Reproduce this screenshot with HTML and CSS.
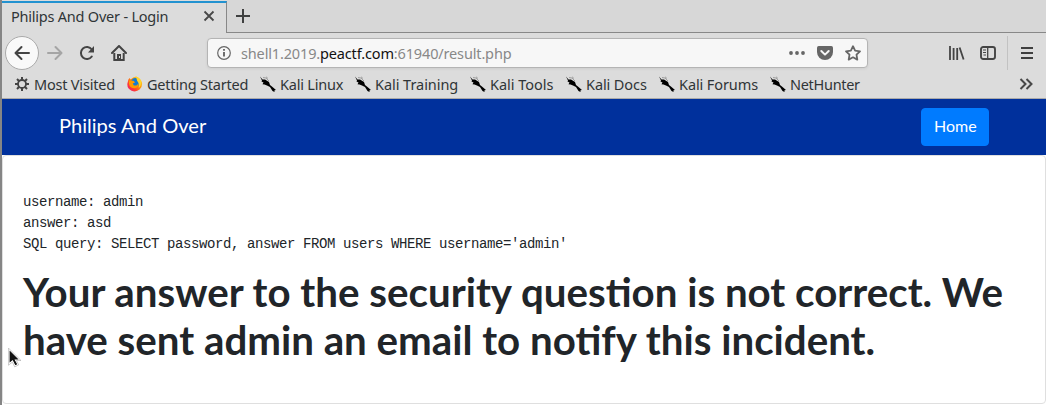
FILE: index.html
```html
<!DOCTYPE html>
<html lang="en">
<head>
<meta charset="utf-8">
<title>Philips And Over - Login</title>
<link rel="stylesheet" href="styles.css">
</head>
<body>
<svg width="0" height="0" class="defs">
  <symbol id="kali" viewBox="0 0 16 16"><path d="M0 .5L2.500 3.500 5 3.500 9 6 10 9 12.500 11 16 14 14.500 14.300 14.500 16 12.500 15 10 11 7 9.500 4.500 8.500 2.500 8.200 3.500 6.500 1.500 5.500 2 4.500z" fill="#000"/><path d="M3 1.500l3 .5 3 3M6 .8l2 1.700" stroke="#777" stroke-width=".6" fill="none"/></symbol>
</svg>
<div class="window">
  <div class="tabs">
    <div class="tab"><span class="tab-title">Philips And Over - Login</span>
      <svg class="close" width="12" height="12" viewBox="0 0 12 12"><path d="M1.5 1.5l9 9M10.5 1.5l-9 9" stroke="#484848" stroke-width="1.8"/></svg>
    </div>
    <div class="tab-rest"><svg width="14" height="14" viewBox="0 0 14 14"><path d="M7 0v14M0 7h14" stroke="#3f4040" stroke-width="2"/></svg></div>
  </div>
  <div class="toolbar">
    <div class="back"><svg width="18" height="16" viewBox="0 0 18 16"><path d="M16 8H3M8.5 2L2.5 8l6 6" fill="none" stroke="#444" stroke-width="2" stroke-linecap="round" stroke-linejoin="round"/></svg></div>
    <svg class="forward" width="18" height="16" viewBox="0 0 18 16"><path d="M2 8h13M9.5 2l6 6-6 6" fill="none" stroke="#a5a5a5" stroke-width="2" stroke-linecap="round" stroke-linejoin="round"/></svg>
    <svg class="reload" width="16" height="16" viewBox="0 0 16 16"><path d="M12.8 4.5A6 6 0 1 0 12.8 11.5" fill="none" stroke="#444" stroke-width="2" stroke-linecap="round"/><path d="M15 1v6.5H9z" fill="#444"/></svg>
    <svg class="home" width="16" height="16" viewBox="0 0 16 16"><path d="M1 8l7-7 7 7" fill="none" stroke="#444" stroke-width="2" stroke-linecap="round" stroke-linejoin="round"/><path d="M3.3 8v7h9.4V8" fill="none" stroke="#444" stroke-width="2"/><path d="M6 9h4v6H6z" fill="#444"/><path d="M8 11h1v2H8z" fill="#ddd"/></svg>
    <div class="urlbar">
      <svg width="14" height="14" viewBox="0 0 14 14"><circle cx="7" cy="7" r="6.3" fill="none" stroke="#666" stroke-width="1.2"/><path d="M7 6v4.5M7 3v1.7" stroke="#555" stroke-width="1.7"/></svg>
      <span class="url">shell1.2019.<b>peactf.com</b>:61940/result.php</span>
      <svg class="dots" width="16" height="4" viewBox="0 0 16 4"><g fill="#666"><circle cx="2" cy="2" r="1.9"/><circle cx="8" cy="2" r="1.9"/><circle cx="14" cy="2" r="1.9"/></g></svg>
      <svg class="pocket" width="16" height="15" viewBox="0 0 16 15"><path d="M1.7 0h12.6A1.7 1.7 0 0 1 16 1.7V6a8 8 0 0 1-16 0V1.7A1.7 1.7 0 0 1 1.7 0z" fill="#666"/><path d="M4.3 5L8 8.6 11.7 5" fill="none" stroke="#f7f7f7" stroke-width="2" stroke-linecap="round" stroke-linejoin="round"/></svg>
      <svg class="star" width="16" height="16" viewBox="0 0 16 16"><path d="M8 1.2l2.1 4.4 4.9.7-3.5 3.4.8 4.9L8 12.3l-4.3 2.3.8-4.9L1 6.3l4.9-.7z" fill="none" stroke="#666" stroke-width="1.8" stroke-linejoin="round"/></svg>
    </div>
    <svg class="library" width="16" height="16" viewBox="0 0 16 16"><path d="M1 1v14M4.6 3v12M8.2 3v12M10.6 2.5l4 12" stroke="#444" stroke-width="1.8"/></svg>
    <svg class="sidebar" width="16" height="14" viewBox="0 0 16 14"><rect x="1" y="1" width="14" height="12" rx="2.2" fill="none" stroke="#444" stroke-width="1.9"/><path d="M7.7 1v12" stroke="#444" stroke-width="1.3"/><path d="M3 4h3M3 6.5h3M3.5 9H6" stroke="#444"/></svg>
    <div class="menu"><svg width="12" height="12" viewBox="0 0 12 12"><path d="M0 1h12M0 6h12M0 11h12" stroke="#3f3f3f" stroke-width="1.9"/></svg></div>
  </div>
  <div class="bookmarks">
    <div class="mark visited"><svg width="14" height="14" viewBox="0 0 14 14"><circle cx="7" cy="7" r="4" fill="none" stroke="#444" stroke-width="1.8"/><path d="M7 0v3M7 11v3M0 7h3M11 7h3M2 2l2.2 2.2M9.8 9.8L12 12M2 12l2.2-2.2M9.8 4.2L12 2" stroke="#444" stroke-width="2"/></svg><span>Most Visited</span></div>
    <div class="mark started"><svg width="16" height="16" viewBox="0 0 16 16"><defs><linearGradient id="fire" x1="1" y1="0" x2="0" y2="1"><stop offset="0" stop-color="#fff44f"/><stop offset=".4" stop-color="#ff9800"/><stop offset=".7" stop-color="#ff3b35"/><stop offset="1" stop-color="#e8157c"/></linearGradient></defs><path d="M1.4 3.5L2.6 2l1 1.4Q6 1 9 .6q4.8 1.6 6 6 .6 4-2.4 7-3.6 2.8-8 1.2Q-.2 12.7.4 7.5z" fill="url(#fire)"/><circle cx="8.3" cy="6.5" r="4.4" fill="#147bd1"/><path d="M2 4.5l4.5.3 1.6 1.6-2.3 1.2 1 2 2.7-.2 2-1.8q0 4-3.7 4.7Q3 12.5 2 8z" fill="#ff9b00"/><path d="M9 .6q4 1.4 5 5 .4 4-2.2 6.5.6-5-1.600-7z" fill="#ffd52d"/></svg><span>Getting Started</span></div>
    <div class="mark linux"><svg width="16" height="16"><use href="#kali"/></svg><span>Kali Linux</span></div>
    <div class="mark training"><svg width="16" height="16"><use href="#kali"/></svg><span>Kali Training</span></div>
    <div class="mark tools"><svg width="16" height="16"><use href="#kali"/></svg><span>Kali Tools</span></div>
    <div class="mark docs"><svg width="16" height="16"><use href="#kali"/></svg><span>Kali Docs</span></div>
    <div class="mark forums"><svg width="16" height="16"><use href="#kali"/></svg><span>Kali Forums</span></div>
    <div class="mark hunter"><svg width="16" height="16"><use href="#kali"/></svg><span>NetHunter</span></div>
    <svg class="more" width="14" height="12" viewBox="0 0 14 12"><path d="M1.5 1l5 5-5 5M7.5 1l5 5-5 5" fill="none" stroke="#484848" stroke-width="2"/></svg>
  </div>
  <nav class="navbar"><span class="brand">Philips And Over</span><a class="btn">Home</a></nav>
  <main class="card">
    <pre class="log">username: admin
answer: asd
SQL query: SELECT password, answer FROM users WHERE username='admin'</pre>
    <h1 class="notice">Your answer to the security question is not correct. We have sent admin an email to notify this incident.</h1>
  </main>
</div>
<svg class="cursor" width="14" height="20" viewBox="0 0 14 20"><path d="M1 1v15l3.5-3 2.5 5 3-1.5L7.5 12H12z" fill="#111" stroke="#fff" stroke-width="1.2"/><path d="M.4 0v17.2l4-3 2.3 4.7 4-2-2.3-4.4H13z" fill="none" stroke="#999" stroke-width=".5"/></svg>
</body>
</html>
```
FILE: styles.css
```css
* { box-sizing: border-box; }
body { margin: 0; width: 1046px; height: 405px; overflow: hidden; background: #fff; font-family: "Noto Sans", sans-serif; }
svg { display: block; flex: none; }
.defs { position: absolute; }
.window { height: 405px; border-left: 2px solid #858585; }
.tabs { display: flex; height: 33px; background: #dcdcdc; }
.tab { display: flex; align-items: center; width: 225px; padding: 0 11px 4px 9px; border-top: 2px solid #2292d0; border-right: 1px solid #888; margin-top: 1px; background: #dcdcdc; }
.tab-title { width: 160px; font-size: 14.5px; letter-spacing: -.22px; color: #303537; white-space: nowrap; }
.close { margin-left: 32px; }
.tab-rest { flex: 1; padding: 9px 0 0 9px; background: #d7d7d7; border-bottom: 1px solid #888; }
.toolbar { display: flex; align-items: center; height: 40px; background: #dcdcdc; }
.back { display: flex; align-items: center; justify-content: center; width: 34px; height: 34px; margin-left: 3px; border: 1px solid #aaa; border-radius: 50%; background: #f9f9f9; }
.forward { margin-left: 7px; }
.reload { margin-left: 15px; }
.home { margin-left: 16px; }
.urlbar { display: flex; align-items: center; width: 661px; height: 30px; margin-left: 80px; padding-left: 9px; border: 1px solid #b4b4b4; border-radius: 4px; background: #f7f7f7; box-shadow: 0 1px 3px #0001; }
.url { width: 540px; margin-left: 10px; font-size: 14.5px; letter-spacing: -.15px; color: #888; white-space: nowrap; }
.url b { font-weight: 400; color: #111; }
.dots { margin-left: 8px; }
.pocket { margin-left: 12px; }
.star { margin-left: 12px; }
.library { margin-left: 81px; }
.sidebar { margin-left: 15px; }
.menu { display: flex; align-items: center; height: 34px; margin-left: 11px; padding-left: 13px; border-left: 1px solid #c2c2c2; }
.bookmarks { display: flex; align-items: center; height: 26px; padding: 0 13px 3px 13px; border-bottom: 1px solid #aaa; background: #dcdcdc; }
.mark { display: flex; align-items: center; gap: 5px; font-size: 14.5px; letter-spacing: -.2px; color: #303537; white-space: nowrap; }
.mark span { line-height: 18px; }
.visited { width: 112px; }
.started { width: 133px; gap: 4px; }
.linux { width: 95px; gap: 4px; }
.training { width: 115px; gap: 4px; letter-spacing: -.05px; }
.tools { width: 96px; gap: 4px; letter-spacing: -.03px; }
.docs { width: 93px; gap: 4px; letter-spacing: -.1px; }
.forums { width: 111px; gap: 4px; letter-spacing: -.1px; }
.hunter { width: 95px; gap: 4px; letter-spacing: -.3px; }
.more { margin-left: auto; }
.navbar { display: flex; align-items: center; justify-content: space-between; height: 56px; padding: 0 57px; background: #00309c; font-family: Lato, sans-serif; color: #fff; }
.brand { font-size: 20.1px; line-height: 30px; padding-bottom: 4px; }
.btn { width: 68px; padding: 5px 12px 7px; border: 1px solid #007bff; border-radius: 4px; background: #007bff; font-size: 16px; line-height: 24px; }
.card { height: 249px; padding: 36px 20px 0; border: 1px solid #dfdfdf; border-radius: 4px; color: #212529; background: #fff; }
.log { margin: 0 0 13px; font: 14px/21px "Liberation Mono", monospace; letter-spacing: -.4px; }
.notice { margin: 0; font: 700 40.27px/48px Lato, sans-serif; }
.cursor { position: absolute; left: 8px; top: 348px; }
```
